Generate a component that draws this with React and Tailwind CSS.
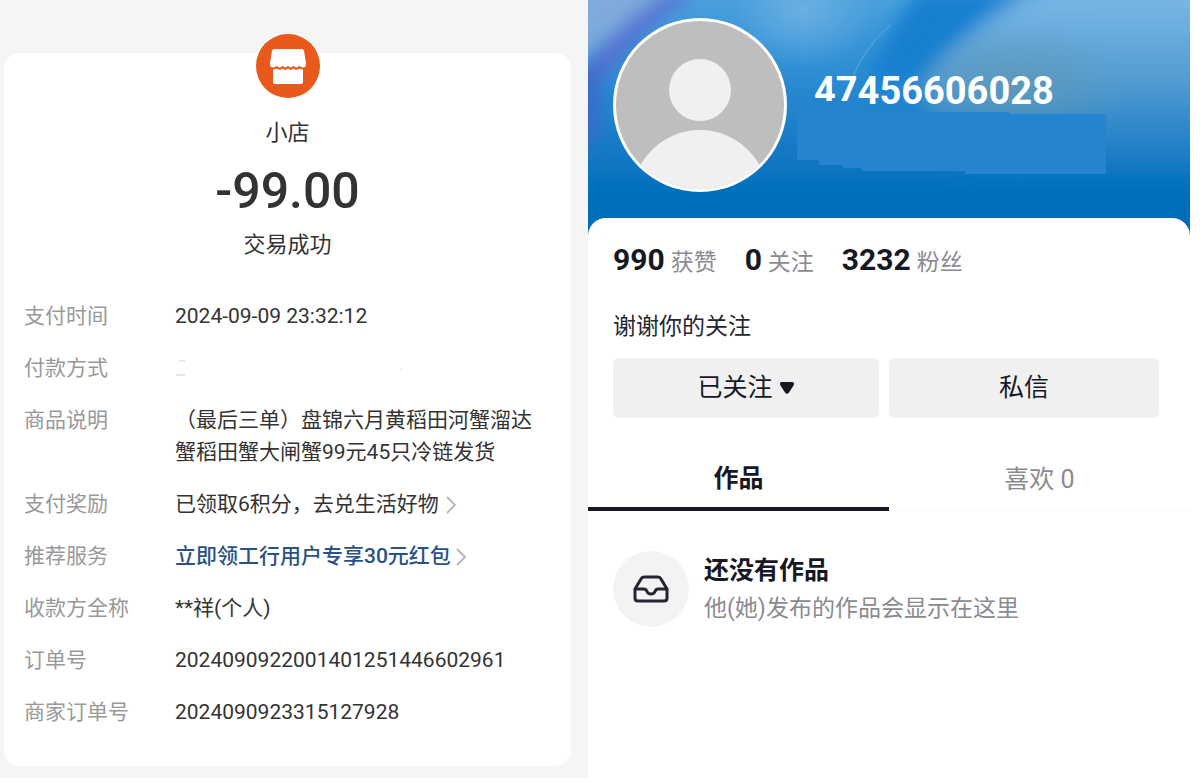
const rows = [
  { label: '支付时间', value: '2024-09-09 23:32:12' },
  { label: '付款方式', masked: true },
  { label: '商品说明', value: '（最后三单）盘锦六月黄稻田河蟹溜达蟹稻田蟹大闸蟹99元45只冷链发货' },
  { label: '支付奖励', value: '已领取6积分，去兑生活好物', kind: 'link' },
  { label: '推荐服务', value: '立即领工行用户专享30元红包', kind: 'promo' },
  { label: '收款方全称', value: '**祥(个人)' },
  { label: '订单号', value: '2024090922001401251446602961' },
  { label: '商家订单号', value: '2024090923315127928' },
]

const stats = [
  { count: '990', label: '获赞' },
  { count: '0', label: '关注' },
  { count: '3232', label: '粉丝' },
]

function ShopLogo() {
  return (
    <svg className="w-16 h-16 shrink-0" viewBox="0 0 64 64" aria-hidden="true">
      <circle cx="32" cy="32" r="32" fill="#e8591c" />
      <path
        d="M18 15h28q1.600 0 2 1.800l2 12.200q.4 4-2.400 4.500-2.600.5-4.400-1.700-2.800 3.400-5.800 0-2.700 3.400-5.400 0-2.700 3.400-5.400 0-3 3.400-5.800 0-1.800 2.200-4.400 1.700-2.800-.5-2.400-4.500l2-12.200q.4-1.800 2-1.800z"
        fill="#fff"
      />
      <path
        d="M17 35.500q2 0 3.600-1 3 2.600 6 0 2.700 2.600 5.400 0 2.700 2.600 5.400 0 3 2.600 6 0 1.600 1 3.600 1V48q0 2-2 2H19q-2 0-2-2z"
        fill="#fff"
      />
    </svg>
  )
}

function Chevron() {
  return (
    <svg className="w-3 h-5 shrink-0" viewBox="0 0 12 20" fill="none" aria-hidden="true">
      <path d="M2 3l8 8-8 8" stroke="#b5b5b5" strokeWidth="1.800" />
    </svg>
  )
}

function RowValue({ row }) {
  if (row.masked) {
    return (
      <svg className="w-60 h-8" viewBox="0 0 240 32" fill="none" aria-hidden="true">
        <path d="M4 9h6M1 23h9" stroke="#dedede" strokeWidth="1.500" />
        <path d="M225 17h2" stroke="#ececec" strokeWidth="1.500" />
      </svg>
    )
  }
  if (row.kind === 'link') {
    return (
      <a href="#rewards" className="flex items-center gap-1.5">
        {row.value}
        <Chevron />
      </a>
    )
  }
  if (row.kind === 'promo') {
    return (
      <a href="#offers" className="flex items-center gap-1 text-[#2a5283] font-medium">
        {row.value}
        <Chevron />
      </a>
    )
  }
  return row.value
}

function Receipt() {
  return (
    <section className="flex flex-col bg-[#f5f5f5] pt-[34px] pb-3 pl-1 pr-[17px] mb-1">
      <div className="flex-1 flow-root bg-white rounded-2xl mt-[19px] pl-5 pr-5">
        <div className="flex flex-col items-center -mt-[19px] text-[#333]">
          <ShopLogo />
          <h1 className="mt-[19px] text-[22px] leading-8">小店</h1>
          <p className="mt-3 text-[50px] leading-[60px] font-medium">-99.00</p>
          <p className="mt-2 text-[22px] leading-8">交易成功</p>
        </div>
        <dl className="mt-[39px] space-y-5 text-[21px] leading-8">
          {rows.map((row) => (
            <div key={row.label} className="flex">
              <dt className="w-[151px] shrink-0 text-[#999]">{row.label}</dt>
              <dd className="min-w-0 pr-2 text-[#333]"><RowValue row={row} /></dd>
            </div>
          ))}
        </dl>
      </div>
    </section>
  )
}

function BannerArt() {
  return (
    <svg className="absolute inset-0 w-full h-full" viewBox="0 0 602 240" preserveAspectRatio="none" aria-hidden="true">
      <defs>
        <linearGradient id="sky" x1="0" y1="0" x2="0" y2="1">
          <stop offset="0" stopColor="#4ba0dc" />
          <stop offset=".4" stopColor="#2587d0" />
          <stop offset=".65" stopColor="#1478c4" />
          <stop offset=".82" stopColor="#006fbc" />
          <stop offset="1" stopColor="#006bb9" />
        </linearGradient>
        <linearGradient id="beam" gradientUnits="userSpaceOnUse" x1="0" y1="0" x2="0" y2="190">
          <stop offset="0" stopColor="#78b6e5" />
          <stop offset=".45" stopColor="#549dd2" stopOpacity=".9" />
          <stop offset=".7" stopColor="#3c8cc8" stopOpacity=".6" />
          <stop offset="1" stopColor="#1478c4" stopOpacity="0" />
        </linearGradient>
        <radialGradient id="haze">
          <stop offset="0" stopColor="#6199b4" stopOpacity=".8" />
          <stop offset="1" stopColor="#6199b4" stopOpacity="0" />
        </radialGradient>
        <radialGradient id="glow">
          <stop offset="0" stopColor="#72b4e4" stopOpacity=".8" />
          <stop offset="1" stopColor="#72b4e4" stopOpacity="0" />
        </radialGradient>
        <filter id="soft" x="-30%" y="-30%" width="160%" height="160%">
          <feGaussianBlur stdDeviation="9" />
        </filter>
      </defs>
      <rect width="602" height="240" fill="url(#sky)" />
      <g filter="url(#soft)">
        <path d="M-20-20H90L-20 70z" fill="#7fabdc" />
        <path d="M85-10Q20 30-10 80V130Q20 50 110-10z" fill="#566ed2" />
        <path d="M-12 70L10 60V130L-12 160z" fill="#4068cb" />
        <path d="M440-10H330Q300 30 275 85H330Q370 30 440-10z" fill="#1580d0" />
        <path d="M450-10Q380 30 335 85L370 200H640V-20z" fill="url(#beam)" />
      </g>
      <ellipse cx="215" cy="10" rx="70" ry="60" fill="url(#glow)" />
      <ellipse cx="430" cy="85" rx="110" ry="60" fill="url(#haze)" />
      <path d="M302 26Q277 48 265 78" fill="none" stroke="#69b1e5" strokeOpacity=".5" strokeWidth="1.500" />
    </svg>
  )
}

function Avatar() {
  return (
    <svg className="w-[174px] h-[174px] shrink-0" viewBox="0 0 174 174" role="img" aria-label="头像">
      <defs>
        <clipPath id="face"><circle cx="87" cy="87" r="84" /></clipPath>
      </defs>
      <circle cx="87" cy="87" r="87" fill="#fff" />
      <g clipPath="url(#face)">
        <rect width="174" height="174" fill="#bebebe" />
        <circle cx="87" cy="72" r="31" fill="#f0f0f0" />
        <circle cx="87" cy="180" r="68" fill="#f0f0f0" />
      </g>
    </svg>
  )
}

function Profile() {
  return (
    <section className="bg-white mr-[10px]">
      <header className="relative h-[236px] overflow-hidden">
        <BannerArt />
        <div className="relative flex pt-[18px] pl-[25px]">
          <Avatar />
          <div className="relative ml-[27px] mt-[49px]">
            <h2 className="text-[38px] leading-[48px] font-bold text-white">47456606028</h2>
            <svg className="absolute -left-[17px] top-[33px] w-[309px] h-[74px]" viewBox="0 0 309 74" aria-hidden="true">
              <path d="M0 13V60H22V65H46V68H65V71H168V74H309V14H212V12H62V1H22V0H0z" fill="#2484cf" />
            </svg>
          </div>
        </div>
      </header>
      <div className="relative -mt-[18px] rounded-t-[18px] bg-white">
        <ul className="flex gap-7 pt-[22px] pl-[25px]">
          {stats.map((stat) => (
            <li key={stat.label} className="flex items-baseline gap-1.5">
              <span className="text-[30px] leading-10 font-bold text-[#161823]">{stat.count}</span>
              <span className="text-[23px] leading-10 text-[#8a8b91]">{stat.label}</span>
            </li>
          ))}
        </ul>
        <p className="mt-7 pl-[25px] text-[23px] leading-8 text-[#252630]">谢谢你的关注</p>
        <div className="mt-[15px] grid grid-cols-[266fr_270fr] gap-[10px] pl-[25px] pr-[31px] text-[25px] text-[#161823]">
          <button type="button" className="h-[60px] rounded-md bg-[#f0f0f0] flex items-center justify-center gap-1.5">
            已关注
            <svg className="w-4 h-3" viewBox="0 0 16 12" aria-hidden="true">
              <path d="M2.500 0H13.500Q16 .5 14.500 3.500L10 10.500Q8 13 6 10.500L1.500 3.500Q0 .5 2.500 0z" fill="#161823" />
            </svg>
          </button>
          <button type="button" className="h-[60px] rounded-md bg-[#f0f0f0]">私信</button>
        </div>
        <div role="tablist" className="mt-8 grid grid-cols-2 text-[25px]">
          <button type="button" role="tab" aria-selected="true" className="h-[61px] border-b-4 border-[#161823] font-bold text-[#161823]">
            作品
          </button>
          <button type="button" role="tab" aria-selected="false" className="h-[61px] border-b border-[#f7f7f7] text-[#8a8b91]">
            喜欢 0
          </button>
        </div>
        <div className="mt-10 pl-[25px] flex items-center gap-[15px]">
          <div className="w-[76px] h-[76px] shrink-0 rounded-full bg-[#f3f3f4] flex items-center justify-center">
            <svg className="w-9 h-7" viewBox="0 0 36 28" fill="none" stroke="#242531" strokeWidth="3" strokeLinejoin="round" aria-hidden="true">
              <path d="M2 14L8 4Q9 2 11 2H25Q27 2 28 4L34 14V23Q34 26 31 26H5Q2 26 2 23z" />
              <path d="M2 14H11Q13 14 14 16.500Q15 19 18 19T22 16.500Q23 14 25 14H34" />
            </svg>
          </div>
          <div>
            <h3 className="text-[25px] leading-10 font-bold text-[#161823]">还没有作品</h3>
            <p className="text-[23px] leading-9 text-[#8a8b91]">他(她)发布的作品会显示在这里</p>
          </div>
        </div>
      </div>
    </section>
  )
}

export default function App() {
  return (
    <main className="min-h-screen grid grid-cols-[588fr_612fr] bg-white font-[Roboto,'Noto_Sans_CJK_SC',sans-serif]">
      <Receipt />
      <Profile />
    </main>
  )
}
